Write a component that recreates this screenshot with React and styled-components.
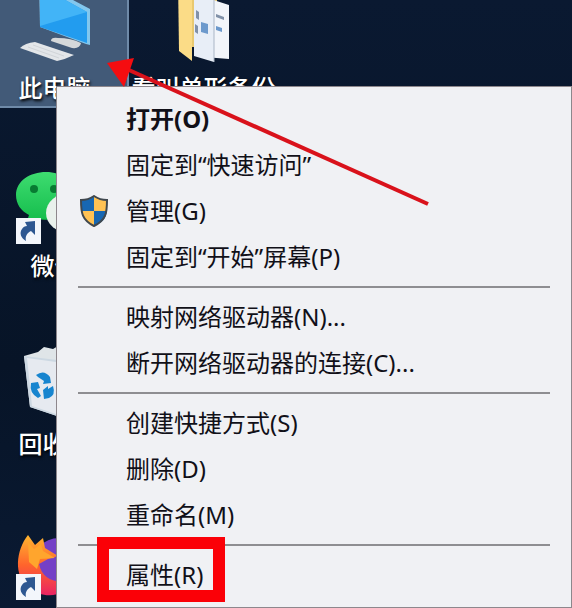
import React from "react";
import styled, { createGlobalStyle, css } from "styled-components";

const Page = createGlobalStyle`
  *, *::before, *::after { box-sizing: border-box; }
  html, body, #root { height: 100%; }
  body {
    margin: 0;
    overflow: hidden;
    background: #0a1930;
    font-family: "Noto Sans", "Noto Sans CJK SC", sans-serif;
    font-size: 24px;
  }
`;

const Desktop = styled.main`
  position: relative;
  height: 100%;
  overflow: hidden;
  background: linear-gradient(180deg, #0a1931 0%, #071427 60%, #0a1a33 100%);
`;

const IconGrid = styled.div`
  display: grid;
  grid-template-columns: repeat(auto-fill, 149px);
  grid-auto-rows: 143px;
  row-gap: 35px;
  margin: -35px 0 0 -20px;
`;

const Shortcut = styled.button`
  display: flex;
  flex-direction: column;
  align-items: center;
  gap: 6px;
  grid-column: ${(p) => p.$column};
  grid-row: ${(p) => p.$row};
  padding: 21px 0 4px;
  border: 0;
  background: transparent;
  color: #fff;
  font: inherit;
  font-weight: 500;
  ${(p) =>
    p.$selected &&
    css`
      background: #425a78;
      box-shadow: inset -2px -2px #6f8aa8;
    `}
`;

const Picture = styled.svg`
  width: 80px;
  height: 80px;
  overflow: visible;
`;

const Caption = styled.span`
  line-height: 32px;
  white-space: nowrap;
  text-shadow: 1px 2px 3px #000;
`;

const Menu = styled.div`
  position: absolute;
  inset: 87px 1px 1px 57px;
  display: flex;
  flex-direction: column;
  padding-top: 9px;
  background: #f0f1f4;
  box-shadow: 0 0 0 1px #8d878c;
`;

const MenuItem = styled.button`
  display: grid;
  grid-template-columns: 34px 1fr;
  column-gap: 15px;
  align-items: center;
  flex-shrink: 0;
  height: 46px;
  padding: 0 20px;
  border: 0;
  background: transparent;
  color: #111018;
  font: inherit;
  font-weight: ${(p) => (p.$strong ? 700 : 400)};
  line-height: 46px;
  text-align: left;
  white-space: nowrap;
`;

const MenuIcon = styled.span`
  display: flex;
  justify-content: center;
`;

const Divider = styled.hr`
  flex-shrink: 0;
  width: auto;
  height: 2px;
  margin: 6px 21px;
  border: 0;
  background: #8e8e91;
`;

const Marked = styled.span`
  position: relative;
  display: inline-block;
  &::after {
    content: "";
    position: absolute;
    inset: -15px -22px -4px -29px;
    border: 12px solid #fb0007;
  }
`;

const Pointer = styled.svg`
  position: absolute;
  top: 50px;
  left: 100px;
  width: 340px;
  height: 165px;
  pointer-events: none;
`;

const LinkBadge = () => (
  <g>
    <path d="M1 54h25v26H1z" fill="#f3f6fb" />
    <path d="M10 58l10-1v14l-4-4c-4 2-6 5-5 10-5-3-7-8-4-12 1-2 3-3 5-3z" fill="#2d5791" />
  </g>
);

const Computer = () => (
  <Picture viewBox="0 0 80 80" aria-hidden="true">
    <path d="M24-4l51 27v36l-4-1-46-17z" fill="#82c7ee" />
    <path d="M25 0l47 26v31L25 41z" fill="#229cef" />
    <path d="M25 0l47 26-47 14z" fill="#42b4f7" />
    <path d="M43 52q-7-1-7 3l21 7q8 1 9-5-10-5-23-5z" fill="#d5d8da" />
    <path d="M20 56q-10 1-15 6l37 13q9-2 17-6z" fill="#e3e6e9" />
    <path d="M18 59l31 11M13 61l31 11" stroke="#d0d4d8" />
  </Picture>
);

const Folder = () => (
  <Picture viewBox="0 0 80 80" aria-hidden="true">
    <path d="M15-5h38v66H15z" fill="#e9c96f" />
    <path d="M40 11l25 8v54l-25-2z" fill="#f2f5fa" />
    <path d="M30 8l20 6v62l-20-6z" fill="#e8eef7" />
    <path d="M50 14v62" stroke="#aab6c5" />
    <path d="M14-6l14 20v61L15 65z" fill="#fbdc87" />
    <path d="M32 24l3 2v8l-3-2zM31 38l3 2v8l-3-2zM52 28l8 3v3l-8-3z" fill="#8191a8" />
    <path d="M37 36l7 2v10l-7-2zM52 40l6 2v4l-6-2z" fill="#6c99cc" />
  </Picture>
);

const Chat = () => (
  <Picture viewBox="0 0 80 80" aria-hidden="true">
    <defs>
      <linearGradient id="chat" x2="0" y2="1">
        <stop stopColor="#3edc70" />
        <stop offset="1" stopColor="#12bb4a" />
      </linearGradient>
    </defs>
    <path d="M31 8C15 8 1 17 1 31c0 9 5 16 13 20l-3 9 11-5c20 4 39-8 39-24C61 17 47 8 31 8z" fill="url(#chat)" />
    <circle cx="19" cy="25" r="4" fill="#087b32" />
    <circle cx="39" cy="25" r="4" fill="#087b32" />
    <ellipse cx="55" cy="49" rx="24" ry="20" fill="#e9f1ec" />
    <LinkBadge />
  </Picture>
);

const Bin = () => (
  <Picture viewBox="0 0 80 80" aria-hidden="true">
    <path d="M9 14l14-4 6-5 9 2 5-3 13 8-7 59-7 3-27-9z" fill="#dfe5e8" />
    <path d="M9 14l33 4v56l-27-9z" fill="#ccd8e2" />
    <path d="M12 16l29 4v52l-24-8z" fill="#e6eaf0" />
    <path d="M21 33q8-6 14 2l1 6-8 1 1-3-6-4zM16 41l7-1 2 6-3 1 4 7-3 2q-9-5-7-15zM28 48l5-4v3l5-3q3 9-4 12l-5 1z" fill="#1785cf" />
  </Picture>
);

const Fox = () => (
  <Picture viewBox="0 0 80 80" aria-hidden="true">
    <defs>
      <linearGradient id="fox" x2="0" y2="1">
        <stop stopColor="#ffb62f" />
        <stop offset=".5" stopColor="#ff642c" />
        <stop offset="1" stopColor="#e92463" />
      </linearGradient>
    </defs>
    <circle cx="44" cy="46" r="28" fill="#7440c6" />
    <path d="M13 15l7 10 8-7 2 10 13 8-10 3-9 5c3 15 17 21 36 16-9 17-31 20-46 8C-2 56 1 30 13 15z" fill="url(#fox)" />
    <path d="M13 22l6 7 7-5 2 7 12 7-15 1-3 10-8-7z" fill="#ffa52d" />
    <LinkBadge />
  </Picture>
);

const Shield = () => (
  <svg width="30" height="32" viewBox="0 0 30 32" aria-hidden="true">
    <path d="M15 1Q9 5 2 5C2 18 3 25 15 31 27 25 28 18 28 5Q21 5 15 1z" fill="#ffc253" />
    <path d="M15 1Q9 5 2 5v11h13zM15 16h13c-1 8-5 12-13 15z" fill="#1767b2" />
    <path d="M15 1Q9 5 2 5C2 18 3 25 15 31 27 25 28 18 28 5Q21 5 15 1z" fill="none" stroke="#40484e" strokeWidth="2" />
  </svg>
);

const shortcuts = [
  { name: "此电脑", Art: Computer, column: 1, row: 1, selected: true },
  { name: "看叫单形备份", Art: Folder, column: 2, row: 1 },
  { name: "微信", Art: Chat, column: 1, row: 2 },
  { name: "回收站", Art: Bin, column: 1, row: 3 },
  { name: "Firefox", Art: Fox, column: 1, row: 4, iconOnly: true },
];

const groups = [
  [
    { label: "打开(O)", strong: true },
    { label: "固定到“快速访问”" },
    { label: "管理(G)", shield: true },
    { label: "固定到“开始”屏幕(P)" },
  ],
  [{ label: "映射网络驱动器(N)..." }, { label: "断开网络驱动器的连接(C)..." }],
  [{ label: "创建快捷方式(S)" }, { label: "删除(D)" }, { label: "重命名(M)" }],
  [{ label: "属性(R)", marked: true }],
];

export default function App() {
  return (
    <Desktop lang="zh-CN">
      <Page />
      <IconGrid>
        {shortcuts.map(({ name, Art, column, row, selected, iconOnly }) => (
          <Shortcut
            key={name}
            type="button"
            aria-label={iconOnly ? name : undefined}
            $column={column}
            $row={row}
            $selected={selected}
          >
            <Art />
            {!iconOnly && <Caption>{name}</Caption>}
          </Shortcut>
        ))}
      </IconGrid>
      <Menu role="menu">
        {groups.map((group, index) => (
          <React.Fragment key={group[0].label}>
            {index > 0 && <Divider />}
            {group.map(({ label, strong, shield, marked }) => (
              <MenuItem key={label} type="button" role="menuitem" $strong={strong}>
                <MenuIcon>{shield && <Shield />}</MenuIcon>
                {marked ? <span><Marked>{label}</Marked></span> : <span>{label}</span>}
              </MenuItem>
            ))}
          </React.Fragment>
        ))}
      </Menu>
      <Pointer viewBox="0 0 340 165" aria-hidden="true">
        <path d="M20 16L328 154" stroke="#d9121b" strokeWidth="4" />
        <path d="M7 13l27-5-10 29z" fill="#f50d10" />
      </Pointer>
    </Desktop>
  );
}
